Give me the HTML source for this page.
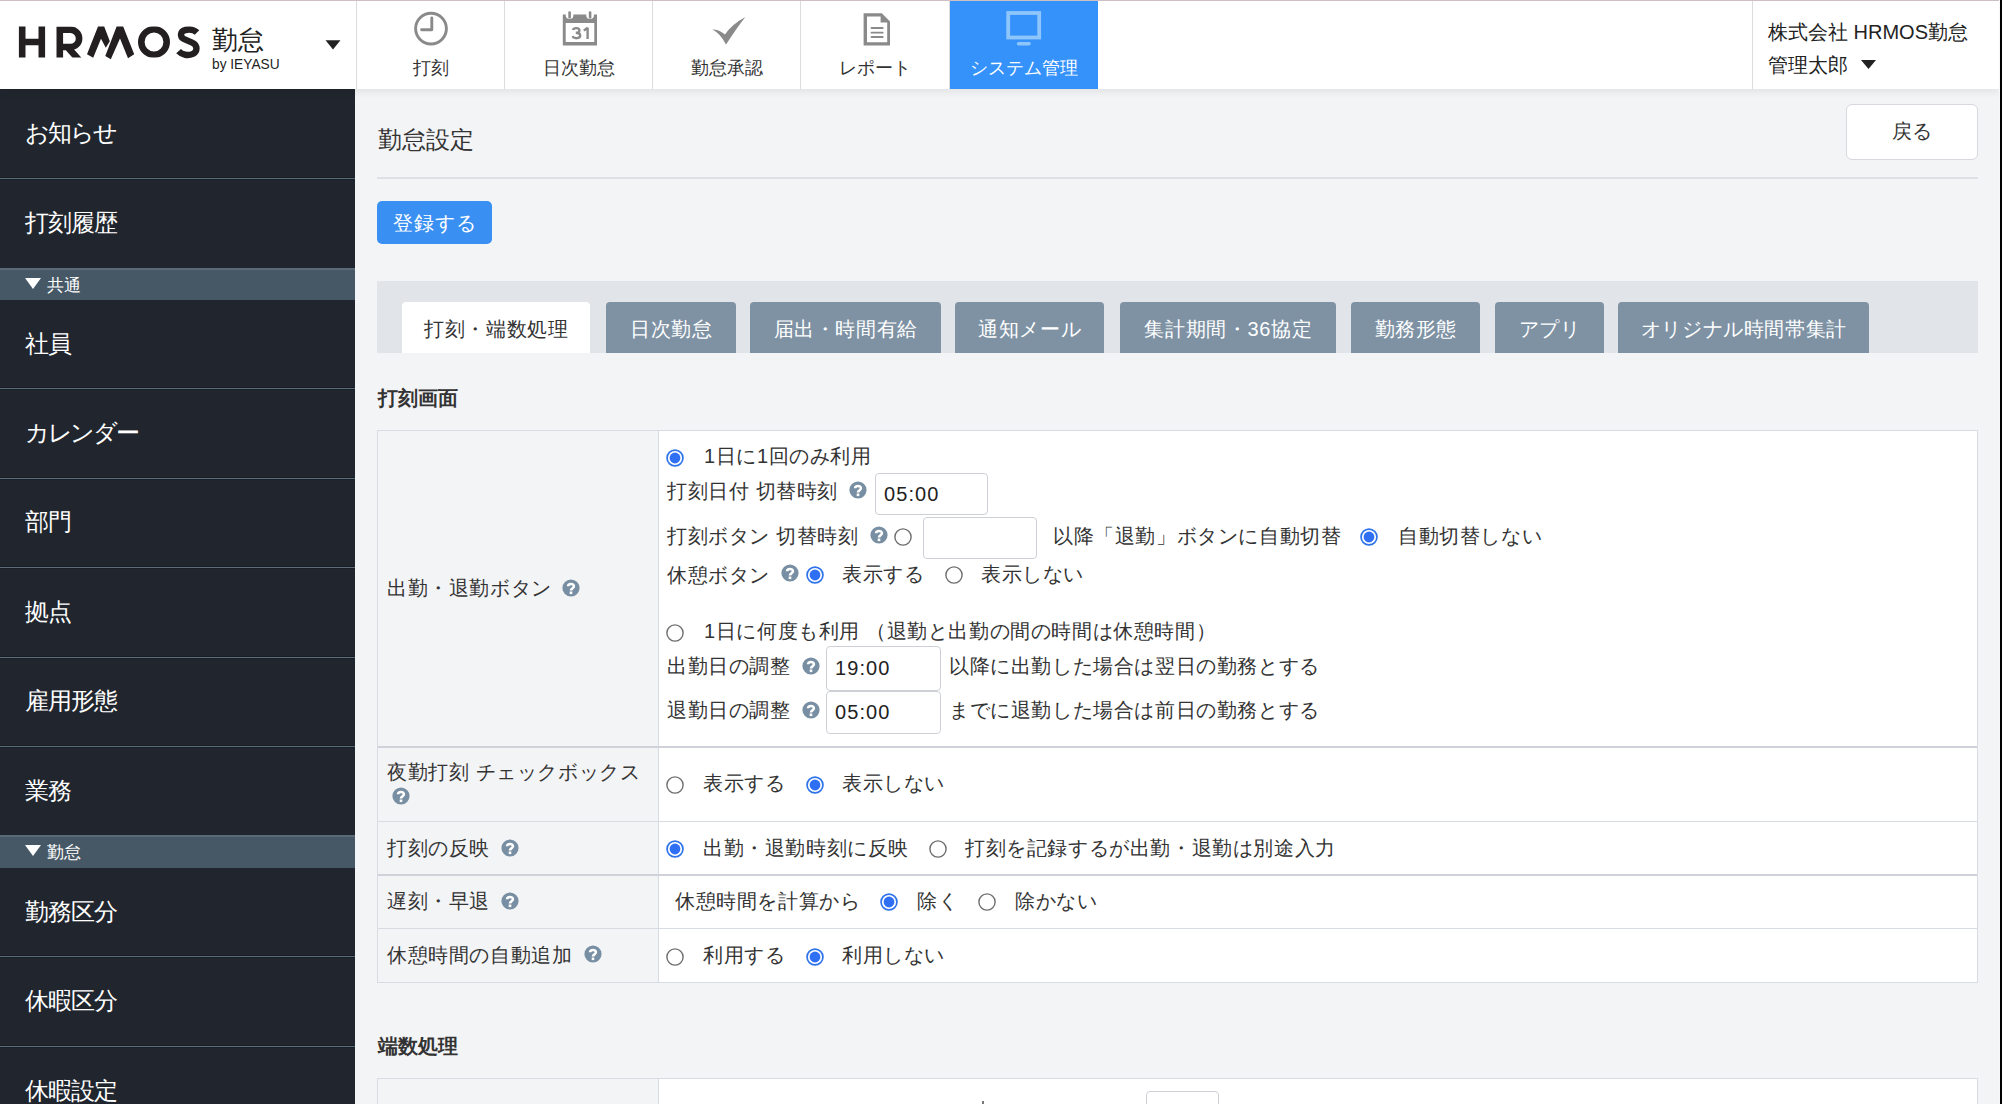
<!DOCTYPE html>
<html lang="ja"><head><meta charset="utf-8"><title>勤怠設定</title>
<style>
*{box-sizing:border-box;margin:0;padding:0}
html,body{width:2002px;height:1104px;overflow:hidden}
body{position:relative;background:#f3f4f6;font-family:"Liberation Sans",sans-serif;color:#333;}
.abs{position:absolute}
#topline{left:0;top:0;width:2000px;height:1px;background:#cdbfc3;z-index:5}
#rstrip{left:2000px;top:0;width:2px;height:1104px;background:#000;z-index:6}
#rstrip2{left:1999px;top:0;width:1px;height:1104px;background:#f7f7f8;z-index:6}
#header{left:0;top:0;width:2000px;height:89px;background:#fff;z-index:3;box-shadow:0 3px 8px rgba(0,0,0,.075)}
.navsep{top:0;width:1px;height:89px;background:#dcdcdc}
.nav{top:0;height:89px;text-align:center;font-size:18px;color:#333}
.nav .lbl{position:absolute;left:0;right:0;top:55.5px;line-height:24px}
#sidebar{left:0;top:0;width:355px;height:1104px;background:#21262e;z-index:2}
.sitem{position:absolute;left:0;width:355px;color:#fff;font-size:24px;line-height:30px;padding-left:25px;letter-spacing:-1px}
.ssep{position:absolute;left:0;width:355px;height:3px;background:linear-gradient(#191d23 0,#191d23 1px,#5c6b78 1px,#5c6b78 2px,#172029 2px)}
.shead{position:absolute;left:0;width:355px;background:#465765;border-top:2px solid #5b6a77;color:#fff;font-size:17px;line-height:32px;padding-left:47px}
.shead:before{content:"";position:absolute;left:25px;top:8px;border-left:8px solid transparent;border-right:8px solid transparent;border-top:11px solid #fff}
.t20{font-size:20px}
.btn-blue{background:#3b8ff0;color:#fff;border-radius:5px}
.tabbar{left:377px;top:281px;width:1601px;height:72px;background:#e1e4e9}
.tab{position:absolute;top:21px;height:51px;background:#7e92a4;color:#fff;font-size:20px;line-height:54px;text-align:center;border-radius:4px 4px 0 0;letter-spacing:0.6px;text-indent:0.6px}
.tab.act{background:#fff;color:#333}
.h3{font-size:20px;font-weight:bold;color:#333}
.tbl{left:377px;width:1601px;background:#fff;border:1px solid #d6dce2}
.lab{position:absolute;left:0;width:281px;background:#f3f4f6;border-right:1px solid #d6dce2}
.rowb{position:absolute;left:0;width:1599px;height:1px;background:#d6dce2}
.txt{position:absolute;font-size:20px;line-height:24px;color:#333;white-space:nowrap;letter-spacing:0.6px}
.q{position:absolute;width:19px;height:19px;border-radius:50%;background:#8095a8;color:#fff;font-size:15px;font-weight:bold;line-height:19px;text-align:center}
.r{position:absolute;width:18px;height:18px;border-radius:50%;border:1px solid #777;background:#fff}
.r.on{border:2px solid #3a86f5;}
.r.on:after{content:"";position:absolute;left:2px;top:2px;width:10px;height:10px;border-radius:50%;background:#3a86f5}
.inp{position:absolute;background:#fff;border:1px solid #cdd1d6;border-radius:4px;font-size:20px;line-height:24px;color:#222;padding-left:8px;letter-spacing:1.1px}
</style></head>
<body>
<div id="topline" class="abs"></div>
<div id="rstrip2" class="abs"></div>
<div id="rstrip" class="abs"></div>

<!-- HEADER -->
<div id="header" class="abs">
  <svg class="abs" style="left:0;top:0" width="356" height="89" viewBox="0 0 356 89">
    <defs><clipPath id="cl"><rect x="0" y="26.5" width="356" height="31"/></clipPath></defs>
    <g fill="none" stroke="#231f20" stroke-width="6.6" clip-path="url(#cl)">
      <path d="M22.2 20V64M41.8 20V64M22.2 42H41.8"/>
      <path d="M59.8 64V29.8H70.5A8.6 8.6 0 0 1 70.5 47H59.8M66.5 46L79 60" stroke-linejoin="miter"/>
      <circle cx="154" cy="42" r="12.7"/>
    </g>
    <path fill="none" stroke="#231f20" stroke-width="6.4" d="M197 32.5C194 29.5 189.5 29.2 185.5 30C180 31.2 179.5 37 184.2 39.2L192.2 42.6C198 45.2 197.5 51.8 193 53.8C188 56 182 55 178.6 51.2"/>
    <g fill="#231f20">
      <path d="M87 54.3L98 26.5H104.2L109.8 41.2L105.8 47.8L101 38.8L93.2 57.8Z"/>
      <path d="M105.3 56L116.6 26.5H123.2L134.2 54.3L128 58.2L120 38.5L110.8 59.2Z"/>
    </g>
    <path d="M325.5 40.2H340.5L333 49.5Z" fill="#222"/>
  </svg>
  <div class="abs" style="left:212px;top:24px;font-size:26px;line-height:32px;color:#222">勤怠</div>
  <div class="abs" style="left:212px;top:55px;font-size:15.5px;line-height:18px;color:#222;transform:scaleX(0.885);transform-origin:0 0">by IEYASU</div>
  <div class="abs navsep" style="left:356px"></div>
  <div class="abs navsep" style="left:504px"></div>
  <div class="abs navsep" style="left:652px"></div>
  <div class="abs navsep" style="left:800px"></div>
  <div class="abs navsep" style="left:949px"></div>
  <div class="abs navsep" style="left:1752px"></div>
  <!-- nav items -->
  <div class="abs nav" style="left:357px;width:147px">
    <svg class="abs" style="left:0;top:0" width="147" height="89"><g fill="none" stroke="#8a8a8a" stroke-width="2.9"><circle cx="74" cy="28.6" r="15.4"/><path d="M74.8 18V29.7H64.6" stroke-linecap="round" stroke-linejoin="round"/></g></svg>
    <div class="lbl">打刻</div>
  </div>
  <div class="abs nav" style="left:505px;width:147px">
    <svg class="abs" style="left:0;top:0" width="147" height="89"><path fill="#8a8a8a" fill-rule="evenodd" d="M57.8 14.6H92V45.6H57.8ZM60.7 23V42H89.3V23Z"/><circle cx="64.6" cy="15.2" r="3.8" fill="#fff"/><circle cx="85.1" cy="15.2" r="3.8" fill="#fff"/><rect x="63.3" y="11.2" width="2.6" height="7.4" rx="1.2" fill="#8a8a8a"/><rect x="83.8" y="11.2" width="2.6" height="7.4" rx="1.2" fill="#8a8a8a"/><g fill="none" stroke="#8a8a8a" stroke-width="2.4"><path d="M68 30C68.6 27.6 74.4 27.4 74.4 30.4C74.4 32.4 72.6 32.8 70.8 32.8C73.2 32.8 75.2 33.6 75.2 35.8C75.2 38.8 68.6 39 67.6 36.2"/><path d="M82.6 27.4V39M78.8 30.6L82.6 27.8"/></g></svg>
    <div class="lbl">日次勤怠</div>
  </div>
  <div class="abs nav" style="left:653px;width:147px">
    <svg class="abs" style="left:0;top:0" width="147" height="89"><path d="M59.4 29.5Q66.5 29.6 72 34.6Q78.5 24.5 92.4 17Q84 27.5 73 44.6Q67.5 33.5 59.4 29.5Z" fill="#8a8a8a"/></svg>
    <div class="lbl">勤怠承認</div>
  </div>
  <div class="abs nav" style="left:801px;width:148px">
    <svg class="abs" style="left:0;top:0" width="148" height="89"><g fill="#8a8a8a"><path d="M62.6 13.2H80.8L89 21.4V45.4H62.6ZM66 16.4V42.2H86.2V22.6H79.6V16.4Z" fill-rule="evenodd"/><rect x="69.6" y="27.1" width="13" height="1.9" rx="0.9"/><rect x="69.6" y="31.7" width="13" height="1.9" rx="0.9"/><rect x="69.6" y="36.1" width="13" height="1.9" rx="0.9"/></g></svg>
    <div class="lbl">レポート</div>
  </div>
  <div class="abs nav" style="left:950px;width:148px;background:#3592fa;color:#fff">
    <svg class="abs" style="left:0;top:0" width="148" height="89"><g fill="none" stroke="#8ec5fb" stroke-width="3.8"><rect x="58.2" y="13" width="31" height="24.5"/></g><rect x="66.8" y="42" width="14" height="3.5" rx="1.7" fill="#8ec5fb"/></svg>
    <div class="lbl">システム管理</div>
  </div>
  <div class="abs" style="left:1768px;top:18px;font-size:20px;line-height:28px;color:#222">株式会社 HRMOS勤怠</div>
  <div class="abs" style="left:1768px;top:51px;font-size:20px;line-height:28px;color:#222">管理太郎</div>
  <svg class="abs" style="left:1860px;top:59px" width="18" height="12"><path d="M1 1H16L8.5 10Z" fill="#222"/></svg>
</div>

<!-- SIDEBAR -->
<div id="sidebar" class="abs">
<div class="sitem" style="top:118px;letter-spacing:-2px">お知らせ</div>
<div class="sitem" style="top:208px">打刻履歴</div>
<div class="sitem" style="top:329px">社員</div>
<div class="sitem" style="top:418px;letter-spacing:-2.3px">カレンダー</div>
<div class="sitem" style="top:507px">部門</div>
<div class="sitem" style="top:597px">拠点</div>
<div class="sitem" style="top:686px">雇用形態</div>
<div class="sitem" style="top:776px">業務</div>
<div class="sitem" style="top:897px">勤務区分</div>
<div class="sitem" style="top:986px">休暇区分</div>
<div class="sitem" style="top:1076px">休暇設定</div>
<div class="ssep" style="top:177px"></div>
<div class="ssep" style="top:387px"></div>
<div class="ssep" style="top:477px"></div>
<div class="ssep" style="top:566px"></div>
<div class="ssep" style="top:656px"></div>
<div class="ssep" style="top:745px"></div>
<div class="ssep" style="top:955px"></div>
<div class="ssep" style="top:1045px"></div>
<div class="shead" style="top:268px;height:32px">共通</div>
<div class="shead" style="top:835px;height:33px">勤怠</div>
</div>

<!-- CONTENT -->
<div class="abs" style="left:378px;top:125px;font-size:24px;line-height:30px;color:#333">勤怠設定</div>
<div class="abs" style="left:1846px;top:104px;width:132px;height:56px;background:#fff;border:1.5px solid #d6d9dd;border-radius:6px;font-size:20px;line-height:52px;text-align:center;color:#333">戻る</div>
<div class="abs" style="left:377px;top:177px;width:1601px;height:2px;background:#dde1e6"></div>
<div class="abs btn-blue" style="left:377px;top:201px;width:115px;height:43px;font-size:20px;line-height:44px;text-align:center;letter-spacing:0.8px;text-indent:0.8px;background:#3a8ff3">登録する</div>

<div class="abs tabbar">
  <div class="tab act" style="left:25px;width:188px">打刻・端数処理</div>
  <div class="tab" style="left:229px;width:130px">日次勤怠</div>
  <div class="tab" style="left:373px;width:191px">届出・時間有給</div>
  <div class="tab" style="left:578px;width:149px">通知メール</div>
  <div class="tab" style="left:743px;width:216px">集計期間・36協定</div>
  <div class="tab" style="left:974px;width:129px">勤務形態</div>
  <div class="tab" style="left:1118px;width:109px">アプリ</div>
  <div class="tab" style="left:1241px;width:251px">オリジナル時間帯集計</div>
</div>

<div class="abs h3" style="left:378px;top:386px;line-height:24px">打刻画面</div>

<!--TABLE-->
<div class="abs" style="left:377px;top:430px;width:1601px;height:553px;background:#d6dce2"></div>
<div class="abs" style="left:378px;top:431px;width:1599px;height:551px;background:#fff"></div>
<div class="abs" style="left:378px;top:431px;width:280px;height:551px;background:#f3f4f6"></div>
<div class="abs" style="left:658px;top:431px;width:1px;height:551px;background:#d6dce2"></div>
<div class="abs" style="left:378px;top:746px;width:1599px;height:2px;background:#cfd2d8"></div>
<div class="abs" style="left:378px;top:821px;width:1599px;height:1px;background:#d6dce2"></div>
<div class="abs" style="left:378px;top:874px;width:1599px;height:2px;background:#cfd2d8"></div>
<div class="abs" style="left:378px;top:928px;width:1599px;height:1px;background:#d6dce2"></div>
<div class="txt" style="left:387px;top:576px">出勤・退勤ボタン</div>
<svg class="abs" style="left:561px;top:578px" width="20" height="20"><circle cx="10" cy="10" r="8.6" fill="#788ea2"/><path d="M7.1 8.3C7.1 5.2 12.9 5.2 12.9 8.3C12.9 10.3 10 10.3 10 12.6" fill="none" stroke="#fff" stroke-width="2.6"/><rect x="8.7" y="13.5" width="2.6" height="2.6" fill="#fff"/></svg>
<div class="txt" style="left:387px;top:760px">夜勤打刻 チェックボックス</div>
<svg class="abs" style="left:391px;top:786px" width="20" height="20"><circle cx="10" cy="10" r="8.6" fill="#788ea2"/><path d="M7.1 8.3C7.1 5.2 12.9 5.2 12.9 8.3C12.9 10.3 10 10.3 10 12.6" fill="none" stroke="#fff" stroke-width="2.6"/><rect x="8.7" y="13.5" width="2.6" height="2.6" fill="#fff"/></svg>
<div class="txt" style="left:387px;top:836px">打刻の反映</div>
<svg class="abs" style="left:500px;top:838px" width="20" height="20"><circle cx="10" cy="10" r="8.6" fill="#788ea2"/><path d="M7.1 8.3C7.1 5.2 12.9 5.2 12.9 8.3C12.9 10.3 10 10.3 10 12.6" fill="none" stroke="#fff" stroke-width="2.6"/><rect x="8.7" y="13.5" width="2.6" height="2.6" fill="#fff"/></svg>
<div class="txt" style="left:387px;top:889px">遅刻・早退</div>
<svg class="abs" style="left:500px;top:891px" width="20" height="20"><circle cx="10" cy="10" r="8.6" fill="#788ea2"/><path d="M7.1 8.3C7.1 5.2 12.9 5.2 12.9 8.3C12.9 10.3 10 10.3 10 12.6" fill="none" stroke="#fff" stroke-width="2.6"/><rect x="8.7" y="13.5" width="2.6" height="2.6" fill="#fff"/></svg>
<div class="txt" style="left:387px;top:943px">休憩時間の自動追加</div>
<svg class="abs" style="left:583px;top:944px" width="20" height="20"><circle cx="10" cy="10" r="8.6" fill="#788ea2"/><path d="M7.1 8.3C7.1 5.2 12.9 5.2 12.9 8.3C12.9 10.3 10 10.3 10 12.6" fill="none" stroke="#fff" stroke-width="2.6"/><rect x="8.7" y="13.5" width="2.6" height="2.6" fill="#fff"/></svg>
<svg class="abs" style="left:665px;top:448px" width="20" height="20"><circle cx="10" cy="10" r="7.95" fill="#fff" stroke="#2f74ea" stroke-width="1.7"/><circle cx="10" cy="10" r="5.4" fill="#2f6ff4"/></svg>
<div class="txt" style="left:704px;top:444px">1日に1回のみ利用</div>
<div class="txt" style="left:667px;top:479px">打刻日付 切替時刻</div>
<svg class="abs" style="left:848px;top:480px" width="20" height="20"><circle cx="10" cy="10" r="8.6" fill="#788ea2"/><path d="M7.1 8.3C7.1 5.2 12.9 5.2 12.9 8.3C12.9 10.3 10 10.3 10 12.6" fill="none" stroke="#fff" stroke-width="2.6"/><rect x="8.7" y="13.5" width="2.6" height="2.6" fill="#fff"/></svg>
<div class="inp" style="left:875px;top:473px;width:113px;height:42px;line-height:40px">05:00</div>
<div class="txt" style="left:667px;top:524px">打刻ボタン 切替時刻</div>
<svg class="abs" style="left:869px;top:525px" width="20" height="20"><circle cx="10" cy="10" r="8.6" fill="#788ea2"/><path d="M7.1 8.3C7.1 5.2 12.9 5.2 12.9 8.3C12.9 10.3 10 10.3 10 12.6" fill="none" stroke="#fff" stroke-width="2.6"/><rect x="8.7" y="13.5" width="2.6" height="2.6" fill="#fff"/></svg>
<svg class="abs" style="left:893px;top:527px" width="20" height="20"><circle cx="10" cy="10" r="8.1" fill="#fff" stroke="#6e6e6e" stroke-width="1.4"/></svg>
<div class="inp" style="left:923px;top:517px;width:114px;height:42px;line-height:40px"></div>
<div class="txt" style="left:1053px;top:524px">以降「退勤」ボタンに自動切替</div>
<svg class="abs" style="left:1359px;top:527px" width="20" height="20"><circle cx="10" cy="10" r="7.95" fill="#fff" stroke="#2f74ea" stroke-width="1.7"/><circle cx="10" cy="10" r="5.4" fill="#2f6ff4"/></svg>
<div class="txt" style="left:1398px;top:524px">自動切替しない</div>
<div class="txt" style="left:667px;top:563px">休憩ボタン</div>
<svg class="abs" style="left:780px;top:563px" width="20" height="20"><circle cx="10" cy="10" r="8.6" fill="#788ea2"/><path d="M7.1 8.3C7.1 5.2 12.9 5.2 12.9 8.3C12.9 10.3 10 10.3 10 12.6" fill="none" stroke="#fff" stroke-width="2.6"/><rect x="8.7" y="13.5" width="2.6" height="2.6" fill="#fff"/></svg>
<svg class="abs" style="left:805px;top:565px" width="20" height="20"><circle cx="10" cy="10" r="7.95" fill="#fff" stroke="#2f74ea" stroke-width="1.7"/><circle cx="10" cy="10" r="5.4" fill="#2f6ff4"/></svg>
<div class="txt" style="left:842px;top:562px">表示する</div>
<svg class="abs" style="left:944px;top:565px" width="20" height="20"><circle cx="10" cy="10" r="8.1" fill="#fff" stroke="#6e6e6e" stroke-width="1.4"/></svg>
<div class="txt" style="left:981px;top:562px">表示しない</div>
<svg class="abs" style="left:665px;top:623px" width="20" height="20"><circle cx="10" cy="10" r="8.1" fill="#fff" stroke="#6e6e6e" stroke-width="1.4"/></svg>
<div class="txt" style="left:704px;top:619px">1日に何度も利用 （退勤と出勤の間の時間は休憩時間）</div>
<div class="txt" style="left:667px;top:654px">出勤日の調整</div>
<svg class="abs" style="left:801px;top:656px" width="20" height="20"><circle cx="10" cy="10" r="8.6" fill="#788ea2"/><path d="M7.1 8.3C7.1 5.2 12.9 5.2 12.9 8.3C12.9 10.3 10 10.3 10 12.6" fill="none" stroke="#fff" stroke-width="2.6"/><rect x="8.7" y="13.5" width="2.6" height="2.6" fill="#fff"/></svg>
<div class="inp" style="left:826px;top:646px;width:115px;height:45px;line-height:43px">19:00</div>
<div class="txt" style="left:949px;top:654px">以降に出勤した場合は翌日の勤務とする</div>
<div class="txt" style="left:667px;top:698px">退勤日の調整</div>
<svg class="abs" style="left:801px;top:700px" width="20" height="20"><circle cx="10" cy="10" r="8.6" fill="#788ea2"/><path d="M7.1 8.3C7.1 5.2 12.9 5.2 12.9 8.3C12.9 10.3 10 10.3 10 12.6" fill="none" stroke="#fff" stroke-width="2.6"/><rect x="8.7" y="13.5" width="2.6" height="2.6" fill="#fff"/></svg>
<div class="inp" style="left:826px;top:691px;width:115px;height:43px;line-height:41px">05:00</div>
<div class="txt" style="left:949px;top:698px">までに退勤した場合は前日の勤務とする</div>
<svg class="abs" style="left:665px;top:775px" width="20" height="20"><circle cx="10" cy="10" r="8.1" fill="#fff" stroke="#6e6e6e" stroke-width="1.4"/></svg>
<div class="txt" style="left:703px;top:771px">表示する</div>
<svg class="abs" style="left:805px;top:775px" width="20" height="20"><circle cx="10" cy="10" r="7.95" fill="#fff" stroke="#2f74ea" stroke-width="1.7"/><circle cx="10" cy="10" r="5.4" fill="#2f6ff4"/></svg>
<div class="txt" style="left:842px;top:771px">表示しない</div>
<svg class="abs" style="left:665px;top:839px" width="20" height="20"><circle cx="10" cy="10" r="7.95" fill="#fff" stroke="#2f74ea" stroke-width="1.7"/><circle cx="10" cy="10" r="5.4" fill="#2f6ff4"/></svg>
<div class="txt" style="left:703px;top:836px">出勤・退勤時刻に反映</div>
<svg class="abs" style="left:928px;top:839px" width="20" height="20"><circle cx="10" cy="10" r="8.1" fill="#fff" stroke="#6e6e6e" stroke-width="1.4"/></svg>
<div class="txt" style="left:965px;top:836px">打刻を記録するが出勤・退勤は別途入力</div>
<div class="txt" style="left:675px;top:889px">休憩時間を計算から</div>
<svg class="abs" style="left:879px;top:892px" width="20" height="20"><circle cx="10" cy="10" r="7.95" fill="#fff" stroke="#2f74ea" stroke-width="1.7"/><circle cx="10" cy="10" r="5.4" fill="#2f6ff4"/></svg>
<div class="txt" style="left:917px;top:889px">除く</div>
<svg class="abs" style="left:977px;top:892px" width="20" height="20"><circle cx="10" cy="10" r="8.1" fill="#fff" stroke="#6e6e6e" stroke-width="1.4"/></svg>
<div class="txt" style="left:1015px;top:889px">除かない</div>
<svg class="abs" style="left:665px;top:947px" width="20" height="20"><circle cx="10" cy="10" r="8.1" fill="#fff" stroke="#6e6e6e" stroke-width="1.4"/></svg>
<div class="txt" style="left:703px;top:943px">利用する</div>
<svg class="abs" style="left:805px;top:947px" width="20" height="20"><circle cx="10" cy="10" r="7.95" fill="#fff" stroke="#2f74ea" stroke-width="1.7"/><circle cx="10" cy="10" r="5.4" fill="#2f6ff4"/></svg>
<div class="txt" style="left:842px;top:943px">利用しない</div>
<div class="abs h3" style="left:378px;top:1034px;line-height:24px">端数処理</div>
<div class="abs" style="left:377px;top:1078px;width:1601px;height:26px;background:#d6dce2"></div>
<div class="abs" style="left:378px;top:1079px;width:1599px;height:25px;background:#fff"></div>
<div class="abs" style="left:378px;top:1079px;width:280px;height:25px;background:#f3f4f6"></div>
<div class="abs" style="left:658px;top:1079px;width:1px;height:25px;background:#d6dce2"></div>
<div class="inp" style="left:1146px;top:1091px;width:73px;height:40px"></div>
<div class="abs" style="left:982px;top:1101px;width:2px;height:3px;background:#777"></div>
<!--/TABLE-->
</body></html>
